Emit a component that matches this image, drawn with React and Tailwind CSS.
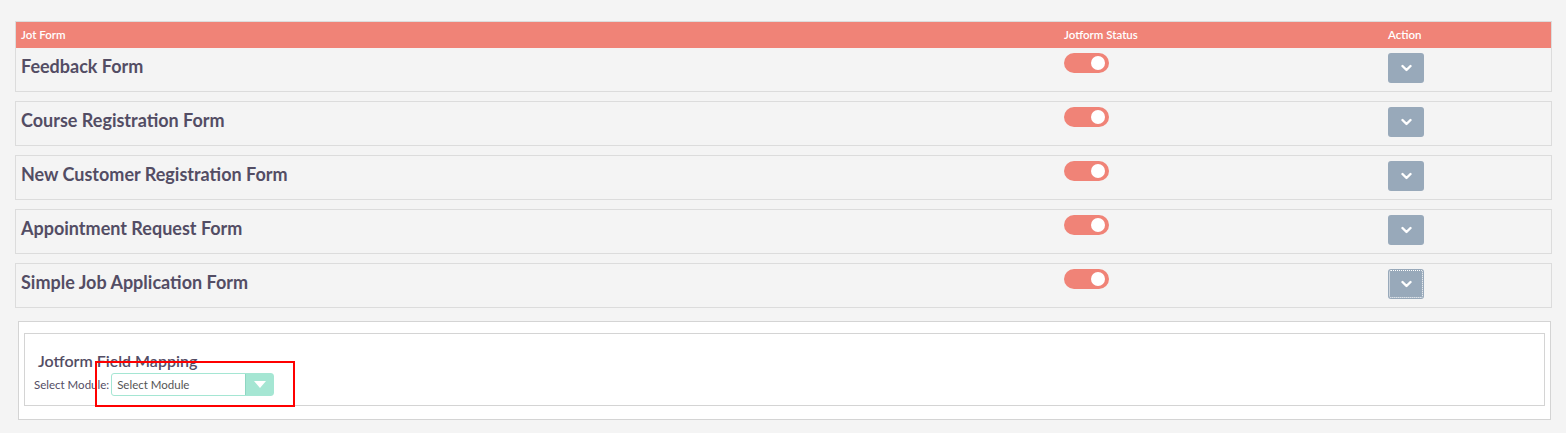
import React from 'react'

const FORMS = [
  'Feedback Form',
  'Course Registration Form',
  'New Customer Registration Form',
  'Appointment Request Form',
  'Simple Job Application Form',
]

function Toggle() {
  return (
    <div className="w-[45px] h-[20px] rounded-full bg-[#f08377] flex items-center justify-end pr-[4px]">
      <div className="w-[14px] h-[14px] rounded-full bg-white" />
    </div>
  )
}

function ActionButton({ focused }) {
  return (
    <button
      className={`w-[36px] h-[30px] rounded-[3px] bg-[#98a9ba] flex items-center justify-center ${
        focused ? 'outline-1 outline-dotted outline-white -outline-offset-2' : ''
      }`}
    >
      <svg width="11" height="8" viewBox="0 0 11 8">
        <path d="M1.5 2 L5.5 6 L9.5 2" fill="none" stroke="white" strokeWidth="2.4" strokeLinecap="round" strokeLinejoin="round" />
      </svg>
    </button>
  )
}

function FormRow({ name, focused }) {
  return (
    <div className="h-[43px] flex items-start pt-[5px] pl-[5px]">
      <div className="w-[1043px] h-[30px] flex items-center">
        <span className="text-[18px] font-bold text-[#534d64] -mt-[3px]">{name}</span>
      </div>
      <div className="w-[324px]">
        <Toggle />
      </div>
      <ActionButton focused={focused} />
    </div>
  )
}

export default function App() {
  return (
    <div className="min-h-[433px] bg-[#f4f4f4] pt-[21px] pl-[15px] pr-[14px] font-['Lato',sans-serif]">
      {/* Form list */}
      <div className="border border-[#dcdcdc]">
        <div className="h-[26px] bg-[#f08377] flex items-center pl-[5px] text-[11.5px] font-semibold text-white">
          <span className="w-[1043px]">Jot Form</span>
          <span className="w-[324px]">Jotform Status</span>
          <span>Action</span>
        </div>
        <FormRow name={FORMS[0]} />
      </div>
      {FORMS.slice(1).map((name, i) => (
        <div key={name} className="mt-[9px] border border-[#dcdcdc]">
          <FormRow name={name} focused={i === FORMS.length - 2} />
        </div>
      ))}

      {/* Field mapping */}
      <div className="mt-[13px] ml-[3px] mr-[1px] border border-[#d4d4d4] bg-white pt-[11px] pb-[13px] px-[5px]">
        <div className="relative border border-[#d4d4d4] pt-[17px] pb-[9px] pl-[9px]">
          <h3 className="pl-[4px] text-[16px] font-semibold text-[#534d64] leading-[20px]">Jotform Field Mapping</h3>
          <div className="flex items-center mt-[2px]">
            <span className="text-[11.5px] text-[#534d64] mr-[2px]">Select Module:</span>
            <div className="w-[163px] h-[23px] border border-[#a5e6d3] rounded-[3px] flex">
              <span className="flex-1 pl-[5px] text-[11.5px] text-[#555555] leading-[21px]">Select Module</span>
              <div className="w-[28px] bg-[#a5e6d3] border-l border-[#8fd6c2] flex items-center justify-center">
                <svg width="12" height="7" viewBox="0 0 12 7">
                  <path d="M0 0 L12 0 L6 7 Z" fill="white" />
                </svg>
              </div>
            </div>
          </div>
          <div className="absolute left-[70px] top-[27px] w-[200px] h-[46px] border-2 border-[#ff0000]" />
        </div>
      </div>
    </div>
  )
}
